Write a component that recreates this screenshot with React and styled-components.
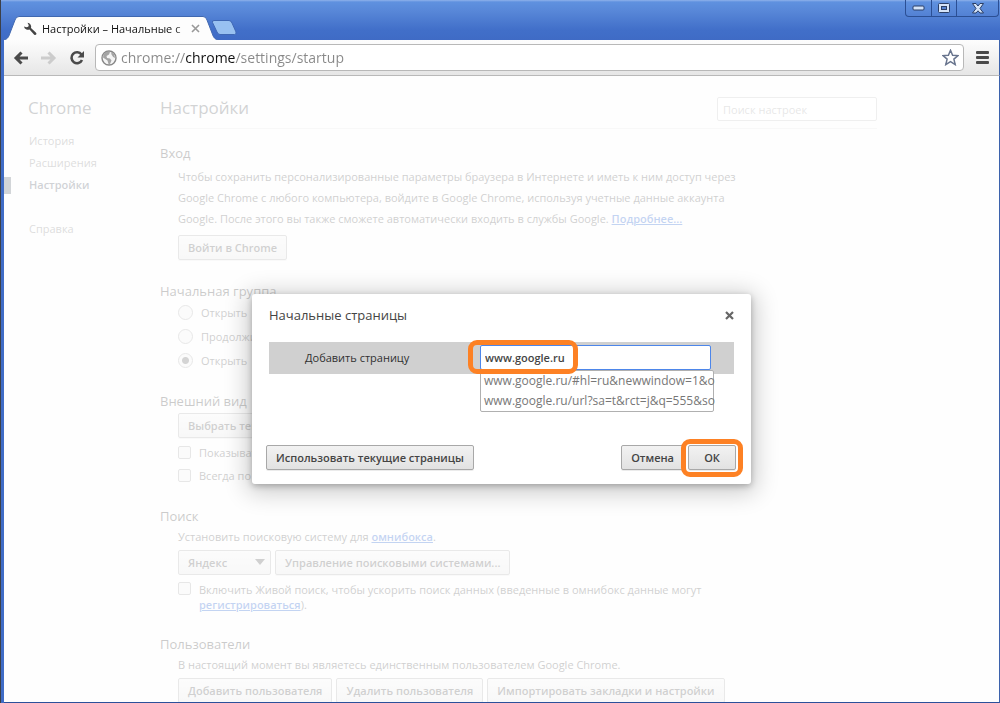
import { useState } from "react";
import styled, { createGlobalStyle } from "styled-components";

const GlobalStyle = createGlobalStyle`
  * {
    box-sizing: border-box;
  }
  body {
    margin: 0;
    font-family: "Open Sans", "Noto Sans", sans-serif;
    font-size: 11px;
    color: #303030;
  }
  button, input, select {
    font-family: inherit;
    font-size: 11px;
    margin: 0;
  }
`;

const Window = styled.div`
  height: 100vh;
  display: flex;
  flex-direction: column;
  overflow: hidden;
  background: #3f6cc6;
  border-left: 1px solid #3c4048;
`;

const TitleBar = styled.div`
  height: 40px;
  flex: none;
  display: flex;
  justify-content: space-between;
  align-items: flex-end;
  padding-left: 3px;
  background: linear-gradient(#8fb2ea 0, #5f91df 2px, #5786d7 12px, #416fc9 30px, #3f6bc5 100%);
`;

const TabStrip = styled.div`
  display: flex;
  align-items: flex-end;
`;

const Tab = styled.div`
  display: flex;
  height: 24px;
`;

const TabEdge = styled.svg`
  display: block;
  flex: none;
`;

const TabBody = styled.div`
  display: flex;
  align-items: center;
  width: 184px;
  padding-left: 4px;
  background: #fdfdfd;
  border-top: 1px solid #4068b0;
`;

const TabTitle = styled.span`
  flex: 1;
  margin-left: 5px;
  overflow: hidden;
  white-space: nowrap;
  line-height: 20px;
  color: #111;
  mask-image: linear-gradient(to right, #000 90%, transparent);
`;

const PlainButton = styled.button`
  display: flex;
  align-items: center;
  justify-content: center;
  padding: 0;
  border: 0;
  background: none;
`;

const NewTab = styled(PlainButton)`
  padding-bottom: 4px;
  margin-left: -7px;
`;

const WindowControls = styled.div`
  align-self: flex-start;
  display: flex;
  height: 17px;
  margin-right: 1px;
  border: 1px solid #2b4f94;
  border-top: 0;
  border-radius: 0 0 4px 4px;
`;

const WindowButton = styled(PlainButton)`
  width: ${(p) => p.$width}px;
  & + & {
    border-left: 1px solid #2b4f94;
  }
`;

const Toolbar = styled.div`
  height: 36px;
  flex: none;
  display: flex;
  align-items: center;
  gap: 12px;
  margin-left: 3px;
  padding: 0 10px 0 9px;
  background: linear-gradient(#fdfdfd, #e6e6e6);
  border-bottom: 1px solid #b9b9b9;
  border-right: 1px solid #3c62ac;
`;

const NavButtons = styled.div`
  display: flex;
  gap: 12px;
`;

const Omnibox = styled.div`
  flex: 1;
  height: 27px;
  margin-left: -2px;
  display: flex;
  align-items: center;
  padding: 0 4px 0 5px;
  background: #fff;
  border: 1px solid #b8b8b8;
  border-radius: 4px;
`;

/* the host part of the address is darker than the rest */
const Address = styled.input`
  flex: 1;
  margin-left: 4px;
  padding: 0;
  border: 0;
  outline: 0;
  font-size: 14px;
  color: transparent;
  background: linear-gradient(to right, #888 65px, #111 65px, #111 114px, #888 114px);
  background-clip: text;
`;

const Page = styled.div`
  flex: 1;
  min-height: 0;
  position: relative;
  overflow: hidden;
  margin-left: 3px;
  display: flex;
  background: #fafafa;
  border-right: 1px solid #3c62ac;
  border-bottom: 1px solid #2c509a;
`;

const Sidebar = styled.nav`
  width: 156px;
  flex: none;
`;

const Brand = styled.h1`
  margin: 0 0 2px;
  padding-left: 24px;
  height: 52px;
  line-height: 64px;
  font-size: 17px;
  font-weight: 400;
  color: #4c5156;
`;

const NavLink = styled.a`
  display: block;
  height: 22px;
  line-height: 22px;
  margin-top: ${(p) => (p.$apart ? 22 : 0)}px;
  padding-left: 25px;
  color: ${(p) => (p.$active ? "#464e5a" : "#777")};
  font-weight: ${(p) => (p.$active ? 600 : 400)};
  text-decoration: none;
  background: ${(p) => (p.$active ? "linear-gradient(#4e5764, #4e5764) 0 3px / 7px 17px no-repeat" : "none")};
`;

const Main = styled.main`
  width: 717px;
  flex: none;
`;

const MainHeader = styled.header`
  display: flex;
  justify-content: space-between;
  height: 53px;
  margin-bottom: 15px;
  border-bottom: 1px solid #e4e4e4;
`;

const Title = styled.h2`
  margin: 0;
  line-height: 64px;
  font-size: 17px;
  font-weight: 400;
  color: #4c5156;
`;

const Search = styled.input`
  width: 160px;
  height: 24px;
  margin-top: 21px;
  padding: 0 5px;
  border: 1px solid #bfbfbf;
  border-radius: 2px;
  background: #fff;
  &::placeholder {
    color: #a0a0a0;
  }
`;

const Section = styled.section`
  margin-bottom: ${(p) => p.$after || 20}px;
`;

const SectionTitle = styled.h3`
  margin: 0 0 ${(p) => p.$after || 0}px;
  line-height: 18px;
  font-size: 13px;
  font-weight: 400;
  color: #333;
`;

const SectionBody = styled.div`
  padding-left: 18px;
`;

const Text = styled.p`
  margin: 0;
  width: 570px;
  line-height: 21px;
  color: #444;
`;

const Link = styled.a`
  color: #15c;
  font-weight: 600;
`;

const Button = styled.button`
  height: 25px;
  padding: 0 9px;
  border: 1px solid #a8a8a8;
  border-radius: 2px;
  background: linear-gradient(#f2f2f2, #e2e2e2);
  box-shadow: 0 1px 0 rgba(0, 0, 0, 0.08);
  font-weight: 600;
  white-space: nowrap;
  color: #444;
`;

const ButtonRow = styled.div`
  display: flex;
  gap: 4px;
  margin: ${(p) => p.$before || 3}px 0 ${(p) => p.$after || 0}px;
`;

const SelectBox = styled.div`
  position: relative;
  svg {
    position: absolute;
    right: 6px;
    top: 9px;
    pointer-events: none;
  }
`;

const Select = styled.select`
  appearance: none;
  display: block;
  width: 93px;
  height: 25px;
  padding: 0 9px;
  border: 1px solid #a8a8a8;
  border-radius: 2px;
  background: linear-gradient(#f2f2f2, #e2e2e2);
  font-weight: 600;
  color: #444;
`;

const Choice = styled.label`
  display: flex;
  min-height: ${(p) => p.$height}px;
  align-items: ${(p) => (p.$top ? "flex-start" : "center")};
  gap: 8px;
  line-height: 15px;
  color: #444;
`;

const Check = styled.input`
  appearance: none;
  flex: none;
  width: 13px;
  height: 13px;
  border: 1px solid #a0a0a0;
  border-radius: 2px;
  background: #f0f0f0;
`;

const Radio = styled.input`
  appearance: none;
  flex: none;
  width: 15px;
  height: 15px;
  border: 1px solid #a0a0a0;
  border-radius: 50%;
  background: #f0f0f0;
  &:checked {
    background: radial-gradient(circle, #555 3px, #f0f0f0 4px);
  }
`;

const Overlay = styled.div`
  position: absolute;
  inset: 0;
  display: flex;
  align-items: center;
  justify-content: center;
  background: rgba(255, 255, 255, 0.75);
`;

const Dialog = styled.div`
  width: 499px;
  padding: 11px 17px 14px;
  background: #fff;
  border-radius: 3px;
  box-shadow: 0 4px 23px 5px rgba(0, 0, 0, 0.2), 0 2px 6px rgba(0, 0, 0, 0.25);
`;

const DialogHeader = styled.div`
  display: flex;
  justify-content: space-between;
  align-items: center;
  height: 20px;
  margin-bottom: 17px;
`;

const DialogTitle = styled.h2`
  margin: 0;
  font-size: 13px;
  font-weight: 400;
  color: #444;
`;

const AddRow = styled.div`
  display: flex;
  align-items: flex-start;
  height: 32px;
  margin-bottom: 71px;
  padding: 3px 0 0 36px;
  background: #d0d0d0;
  label {
    width: 175px;
    line-height: 25px;
  }
`;

const UrlField = styled.div`
  position: relative;
`;

const UrlInput = styled.input`
  display: block;
  width: 231px;
  height: 25px;
  padding: 0 4px;
  border: 1px solid #4d86ea;
  border-radius: 2px;
  outline: 0;
  background: #fff;
  font-weight: 600;
  color: #444;
`;

const Suggestions = styled.ul`
  position: absolute;
  top: 25px;
  left: 0;
  width: 234px;
  margin: 0;
  padding: 0 0 0 3px;
  list-style: none;
  white-space: nowrap;
  background: #fff;
  border: 1px solid #b0b0b0;
  border-radius: 2px;
  font-size: 12px;
  line-height: 20px;
  color: #777;
`;

const Marker = styled.span`
  position: absolute;
  inset: ${(p) => p.$inset};
  border: 5px solid #fd8124;
  border-radius: 9px;
  pointer-events: none;
`;

const DialogActions = styled.div`
  display: flex;
  justify-content: space-between;
  margin: 0 -3px;
`;

const ActionGroup = styled.div`
  display: flex;
  gap: 4px;
  padding-right: 1px;
`;

const OkBox = styled.div`
  position: relative;
  ${Button} {
    width: 48px;
  }
`;

const suggestions = ["www.google.ru/#hl=ru&newwindow=1&o", "www.google.ru/url?sa=t&rct=j&q=555&so"];

const NavArrow = ({ color, flip }) => (
  <svg width="16" height="14" viewBox="0 0 16 14" fill="none" stroke={color} strokeWidth="3">
    <path d={flip ? "M0 7h12M7.5 1.5 13 7l-5.500 5.500" : "M15 7H3M8.500 1.500 3 7l5.500 5.500"} />
  </svg>
);

const App = () => {
  const [address, setAddress] = useState("chrome://chrome/settings/startup");
  const [url, setUrl] = useState("www.google.ru");
  const [startup, setStartup] = useState("pages");

  return (
    <>
      <GlobalStyle />
      <Window>
        <TitleBar>
          <TabStrip>
            <Tab>
              <TabEdge width="15" height="24" viewBox="0 0 15 24">
                <path d="M0 24C4 23 5 20 6 17L11 4Q12 .5 15 .5V24Z" fill="#fdfdfd" />
                <path d="M0 24C4 23 5 20 6 17L11 4Q12 .5 15 .5" fill="none" stroke="#4068b0" />
              </TabEdge>
              <TabBody>
                <svg width="14" height="14" viewBox="0 0 14 14">
                  <path
                    d="M1 4.500A4 4 0 0 0 6.500 7.500L11 12.500Q12.300 13.500 13.200 12.600 14 11.700 12.800 10.500L8 6A4 4 0 0 0 4.500.8L5.800 3.200 5.200 4.700 3.500 5.200Z"
                    fill="#444"
                  />
                </svg>
                <TabTitle>Настройки – Начальные с</TabTitle>
                <PlainButton aria-label="Закрыть вкладку">
                  <svg width="13" height="9" viewBox="0 0 13 9" stroke="#999" strokeWidth="1.600">
                    <path d="M2 1l7 7M9 1 2 8" />
                  </svg>
                </PlainButton>
              </TabBody>
              <TabEdge width="15" height="24" viewBox="0 0 15 24">
                <path d="M0 .5Q3 .5 4 4L9 17C10 20 11 23 15 24H0Z" fill="#fdfdfd" />
                <path d="M0 .5Q3 .5 4 4L9 17C10 20 11 23 15 24" fill="none" stroke="#4068b0" />
              </TabEdge>
            </Tab>
            <NewTab aria-label="Новая вкладка">
              <svg width="26" height="17" viewBox="0 0 26 17">
                <path
                  d="M3 1.500H18Q20 1.500 21 4L25 13Q25.500 15.500 23.500 15.500H9Q7 15.500 6 13L1.500 3.500Q1 1.500 3 1.500Z"
                  fill="#98c1f1"
                  stroke="#3f68b4"
                />
              </svg>
            </NewTab>
          </TabStrip>
          <WindowControls>
            <WindowButton $width={25} aria-label="Свернуть">
              <svg width="13" height="6" viewBox="0 0 13 6">
                <rect x="1" y="1" width="11" height="4" rx="1" fill="#d4e3f8" stroke="#2b3f66" />
              </svg>
            </WindowButton>
            <WindowButton $width={25} aria-label="Развернуть">
              <svg width="13" height="11" viewBox="0 0 13 11" stroke="#2b3f66">
                <rect x=".5" y=".5" width="11" height="9" rx="1" fill="#d4e3f8" />
                <rect x="3.500" y="3.500" width="5" height="3" fill="#5582d0" />
              </svg>
            </WindowButton>
            <WindowButton $width={42} aria-label="Закрыть">
              <svg width="12" height="11" viewBox="0 0 12 11">
                <path
                  d="M.5.5H4L6 3 8 .5h3.500L8 5.500l3.500 4.500H8L6 7.800 4 10H.5L4 5.500Z"
                  fill="#d4e3f8"
                  stroke="#2b3f66"
                />
              </svg>
            </WindowButton>
          </WindowControls>
        </TitleBar>

        <Toolbar>
          <NavButtons>
            <PlainButton aria-label="Назад">
              <NavArrow color="#4a4a4a" />
            </PlainButton>
            <PlainButton aria-label="Вперед">
              <NavArrow color="#ccc" flip />
            </PlainButton>
            <PlainButton aria-label="Обновить">
              <svg width="16" height="16" viewBox="0 0 16 16">
                <path d="M12.500 4.500A5.500 5.500 0 1 0 13 10" fill="none" stroke="#4a4a4a" strokeWidth="2.600" />
                <path d="M15 1V7.500H8.500Z" fill="#4a4a4a" />
              </svg>
            </PlainButton>
          </NavButtons>
          <Omnibox>
            <svg width="16" height="16" viewBox="0 0 16 16">
              <circle cx="8" cy="8" r="7" fill="#f4f4f4" stroke="#888" strokeWidth="1.400" />
              <path
                d="M2.500 4 6 1.500 9 2 8 4.500 5.500 6 6 8 9 8.500 10.500 10.500 9 14 7.500 14 6.500 10.500 2 7.500ZM10 2l3 2 1.200 4-2-1-1.700-2.500Z"
                fill="#a4a4a4"
              />
            </svg>
            <Address
              aria-label="Адрес"
              spellCheck={false}
              value={address}
              onChange={(e) => setAddress(e.target.value)}
            />
            <PlainButton aria-label="Добавить в закладки">
              <svg width="17" height="17" viewBox="0 0 17 17">
                <path
                  d="M8.500 1.300 10.600 6.200 16 6.600 11.900 10.100 13.200 15.600 8.500 12.700 3.800 15.600 5.100 10.100 1 6.600 6.400 6.200Z"
                  fill="#fff"
                  stroke="#69758e"
                  strokeWidth="1.500"
                />
              </svg>
            </PlainButton>
          </Omnibox>
          <PlainButton aria-label="Меню">
            <svg width="13" height="13" viewBox="0 0 13 13" fill="#4a4a4a">
              <rect width="13" height="3" rx="1" />
              <rect y="5" width="13" height="3" rx="1" />
              <rect y="10" width="13" height="3" rx="1" />
            </svg>
          </PlainButton>
        </Toolbar>

        <Page>
          <Sidebar>
            <Brand>Chrome</Brand>
            <NavLink href="#history">История</NavLink>
            <NavLink href="#extensions">Расширения</NavLink>
            <NavLink href="#settings" $active>Настройки</NavLink>
            <NavLink href="#help" $apart>Справка</NavLink>
          </Sidebar>

          <Main>
            <MainHeader>
              <Title>Настройки</Title>
              <Search type="text" placeholder="Поиск настроек" aria-label="Поиск настроек" />
            </MainHeader>

            <Section $after={22}>
              <SectionTitle $after={4}>Вход</SectionTitle>
              <SectionBody>
                <Text>
                  Чтобы сохранить персонализированные параметры браузера в Интернете и иметь к ним доступ через
                  Google Chrome с любого компьютера, войдите в Google Chrome, используя учетные данные аккаунта
                  Google. После этого вы также сможете автоматически входить в службы Google.{" "}
                  <Link href="#more">Подробнее...</Link>
                </Text>
                <ButtonRow $before={6}>
                  <Button>Войти в Chrome</Button>
                </ButtonRow>
              </SectionBody>
            </Section>

            <Section>
              <SectionTitle>Начальная группа</SectionTitle>
              <SectionBody>
                <Choice $height={24}>
                  <Radio type="radio" name="startup" checked={startup === "newtab"} onChange={() => setStartup("newtab")} />
                  Открыть
                </Choice>
                <Choice $height={24}>
                  <Radio type="radio" name="startup" checked={startup === "continue"} onChange={() => setStartup("continue")} />
                  Продолжить
                </Choice>
                <Choice $height={24}>
                  <Radio type="radio" name="startup" checked={startup === "pages"} onChange={() => setStartup("pages")} />
                  Открыть
                </Choice>
              </SectionBody>
            </Section>

            <Section>
              <SectionTitle>Внешний вид</SectionTitle>
              <SectionBody>
                <ButtonRow $after={3}>
                  <Button>Выбрать тему</Button>
                </ButtonRow>
                <Choice $height={23}>
                  <Check type="checkbox" />
                  Показывать
                </Choice>
                <Choice $height={23}>
                  <Check type="checkbox" />
                  Всегда по
                </Choice>
              </SectionBody>
            </Section>

            <Section $after={23}>
              <SectionTitle $after={1}>Поиск</SectionTitle>
              <SectionBody>
                <Text>
                  Установить поисковую систему для <Link href="#omnibox">омнибокса</Link>.
                </Text>
                <ButtonRow $after={7}>
                  <SelectBox>
                    <Select aria-label="Поисковая система" defaultValue="Яндекс">
                      <option>Яндекс</option>
                    </Select>
                    <svg width="10" height="6" viewBox="0 0 10 6">
                      <path d="M0 0h10L5 6Z" fill="#444" />
                    </svg>
                  </SelectBox>
                  <Button>Управление поисковыми системами...</Button>
                </ButtonRow>
                <Choice $height={30} $top>
                  <Check type="checkbox" />
                  <span>
                    Включить Живой поиск, чтобы ускорить поиск данных (введенные в омнибокс данные могут
                    <br />
                    <Link href="#instant">регистрироваться</Link>).
                  </span>
                </Choice>
              </SectionBody>
            </Section>

            <Section>
              <SectionTitle $after={1}>Пользователи</SectionTitle>
              <SectionBody>
                <Text>В настоящий момент вы являетесь единственным пользователем Google Chrome.</Text>
                <ButtonRow>
                  <Button>Добавить пользователя</Button>
                  <Button>Удалить пользователя</Button>
                  <Button>Импортировать закладки и настройки</Button>
                </ButtonRow>
              </SectionBody>
            </Section>
          </Main>

          <Overlay>
            <Dialog role="dialog" aria-labelledby="dialog-title">
              <DialogHeader>
                <DialogTitle id="dialog-title">Начальные страницы</DialogTitle>
                <PlainButton aria-label="Закрыть">
                  <svg width="9" height="9" viewBox="0 0 9 9" stroke="#666" strokeWidth="2.200">
                    <path d="M1 1l7 7M8 1 1 8" />
                  </svg>
                </PlainButton>
              </DialogHeader>
              <AddRow>
                <label htmlFor="page-url">Добавить страницу</label>
                <UrlField>
                  <UrlInput id="page-url" value={url} onChange={(e) => setUrl(e.target.value)} />
                  <Suggestions>
                    {suggestions.map((s) => (
                      <li key={s}>{s}</li>
                    ))}
                  </Suggestions>
                  <Marker $inset="-5px 133px -4px -12px" />
                </UrlField>
              </AddRow>
              <DialogActions>
                <Button>Использовать текущие страницы</Button>
                <ActionGroup>
                  <Button>Отмена</Button>
                  <OkBox>
                    <Button>ОК</Button>
                    <Marker $inset="-6px -7px -7px -7px" />
                  </OkBox>
                </ActionGroup>
              </DialogActions>
            </Dialog>
          </Overlay>
        </Page>
      </Window>
    </>
  );
};

export default App;
